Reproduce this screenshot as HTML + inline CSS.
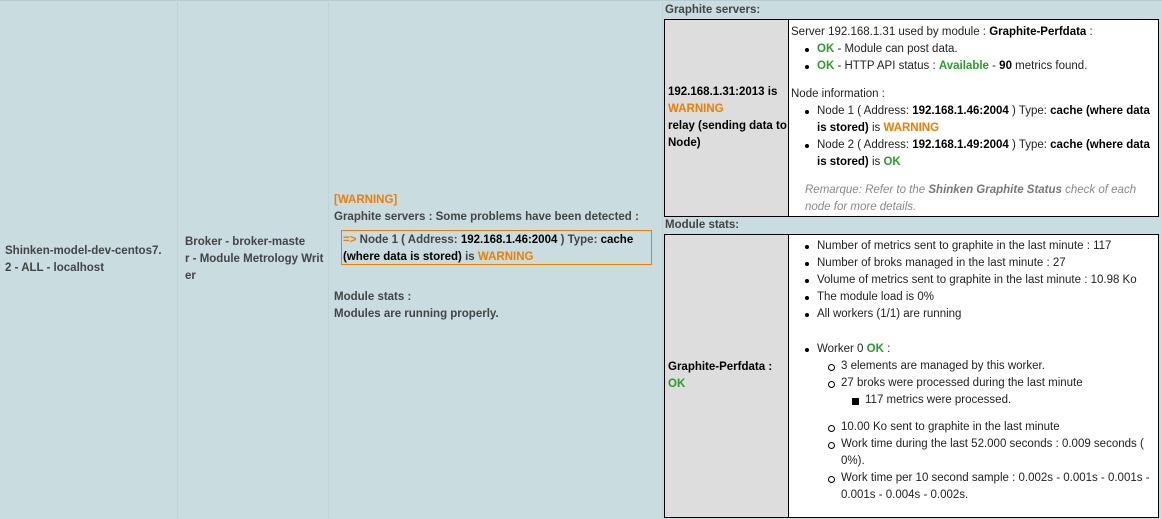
<!DOCTYPE html>
<html><head><meta charset="utf-8"><style>
*{margin:0;padding:0;box-sizing:border-box}
body{width:1162px;height:519px;background:#c9dde0;font-family:"Liberation Sans",sans-serif;font-size:11.5px;color:#333;position:relative;overflow:hidden;line-height:17px}
.a{position:absolute}
.vl{position:absolute;top:0;height:519px;width:1px;background:#c0d3d6}
b{color:#000}
.w{color:#f07d00;font-weight:bold}
.ok{color:#2e9a2e;font-weight:bold}
ul{list-style:none}
li{position:relative;padding-left:26px}
li:before{content:"";position:absolute;left:14px;top:7px;width:4px;height:4px;border-radius:50%;background:#000}
ul ul li{padding-left:24px}
ul ul li:before{left:11px;top:6px;width:5px;height:5px;border:1px solid #000;background:none}
ul ul ul li:before{border-radius:0;background:#000}
</style></head><body>
<div style="position:absolute;left:0;top:0;width:1162px;height:1px;background:#b8cccf"></div>
<div class="vl" style="left:177px"></div>
<div class="vl" style="left:328px"></div>
<div class="vl" style="left:662px"></div>
<div class="a" style="left:5px;top:243px;width:168px;font-weight:bold;color:#444">Shinken-model-dev-centos7.<br>2 - ALL - localhost</div>
<div class="a" style="left:185px;top:234px;width:140px;font-weight:bold;color:#444">Broker - broker-maste<br>r - Module Metrology Writ<br>er</div>
<div class="a" style="left:334px;top:192px;width:320px;font-weight:bold;color:#444">
<div class="w">[WARNING]</div>
<div>Graphite servers : Some problems have been detected :</div>
<div style="margin:4px 0 0 7px;border:1px solid #f07d00;padding:1px 0 0 1px;width:311px;height:35px"><span class="w">=&gt;</span> Node 1 ( Address: <b>192.168.1.46:2004</b> ) Type: <b>cache (where data is stored)</b> is <span class="w">WARNING</span></div>
<div style="margin-top:24px">Module stats :</div>
<div>Modules are running properly.</div>
</div>
<div class="a" style="left:665px;top:2px;font-weight:bold;color:#444">Graphite servers:</div>
<div class="a" style="left:664px;top:19px;width:495px;height:198px;border:1px solid #000;background:#fff">
 <div class="a" style="left:0;top:0;width:124px;height:196px;background:#ddd;border-right:1px solid #000"></div>
 <div class="a" style="left:3px;top:64px;width:120px;font-weight:bold;color:#000">192.168.1.31:2013 is <span class="w">WARNING</span><br>relay (sending data to Node)</div>
 <div class="a" style="left:126px;top:4px;width:366px;color:#222">
  Server 192.168.1.31 used by module : <b>Graphite-Perfdata</b> :
  <ul><li><span class="ok">OK</span> - Module can post data.</li><li><span class="ok">OK</span> - HTTP API status : <span class="ok">Available</span> - <b>90</b> metrics found.</li></ul>
  <div style="margin-top:11px">Node information :</div>
  <ul><li>Node 1 ( Address: <b>192.168.1.46:2004</b> ) Type: <b>cache (where data is stored)</b> is <span class="w">WARNING</span></li>
  <li>Node 2 ( Address: <b>192.168.1.49:2004</b> ) Type: <b>cache (where data is stored)</b> is <span class="ok">OK</span></li></ul>
  <div style="margin:11px 0 0 14px;color:#888;font-style:italic">Remarque: Refer to the <b style="color:#777">Shinken Graphite Status</b> check of each node for more details.</div>
 </div>
</div>
<div class="a" style="left:665px;top:217px;font-weight:bold;color:#444">Module stats:</div>
<div class="a" style="left:664px;top:234px;width:495px;height:284px;border:1px solid #000;background:#fff">
 <div class="a" style="left:0;top:0;width:124px;height:282px;background:#ddd;border-right:1px solid #000"></div>
 <div class="a" style="left:3px;top:124px;font-weight:bold;color:#000">Graphite-Perfdata :<br><span class="ok">OK</span></div>
 <div class="a" style="left:126px;top:3px;width:366px;color:#222">
 <ul><li>Number of metrics sent to graphite in the last minute : 117</li>
 <li>Number of broks managed in the last minute : 27</li>
 <li>Volume of metrics sent to graphite in the last minute : 10.98 Ko</li>
 <li>The module load is 0%</li>
 <li>All workers (1/1) are running</li>
 <li style="margin-top:18px">Worker 0 <span class="ok">OK</span> :
  <ul><li>3 elements are managed by this worker.</li>
  <li>27 broks were processed during the last minute
   <ul><li>117 metrics were processed.</li></ul></li>
  <li style="margin-top:10px">10.00 Ko sent to graphite in the last minute</li>
  <li>Work time during the last 52.000 seconds : 0.009 seconds ( 0%).</li>
  <li>Work time per 10 second sample : 0.002s - 0.001s - 0.001s - 0.001s - 0.004s - 0.002s.</li></ul></li></ul>
 </div>
</div>
</body></html>
